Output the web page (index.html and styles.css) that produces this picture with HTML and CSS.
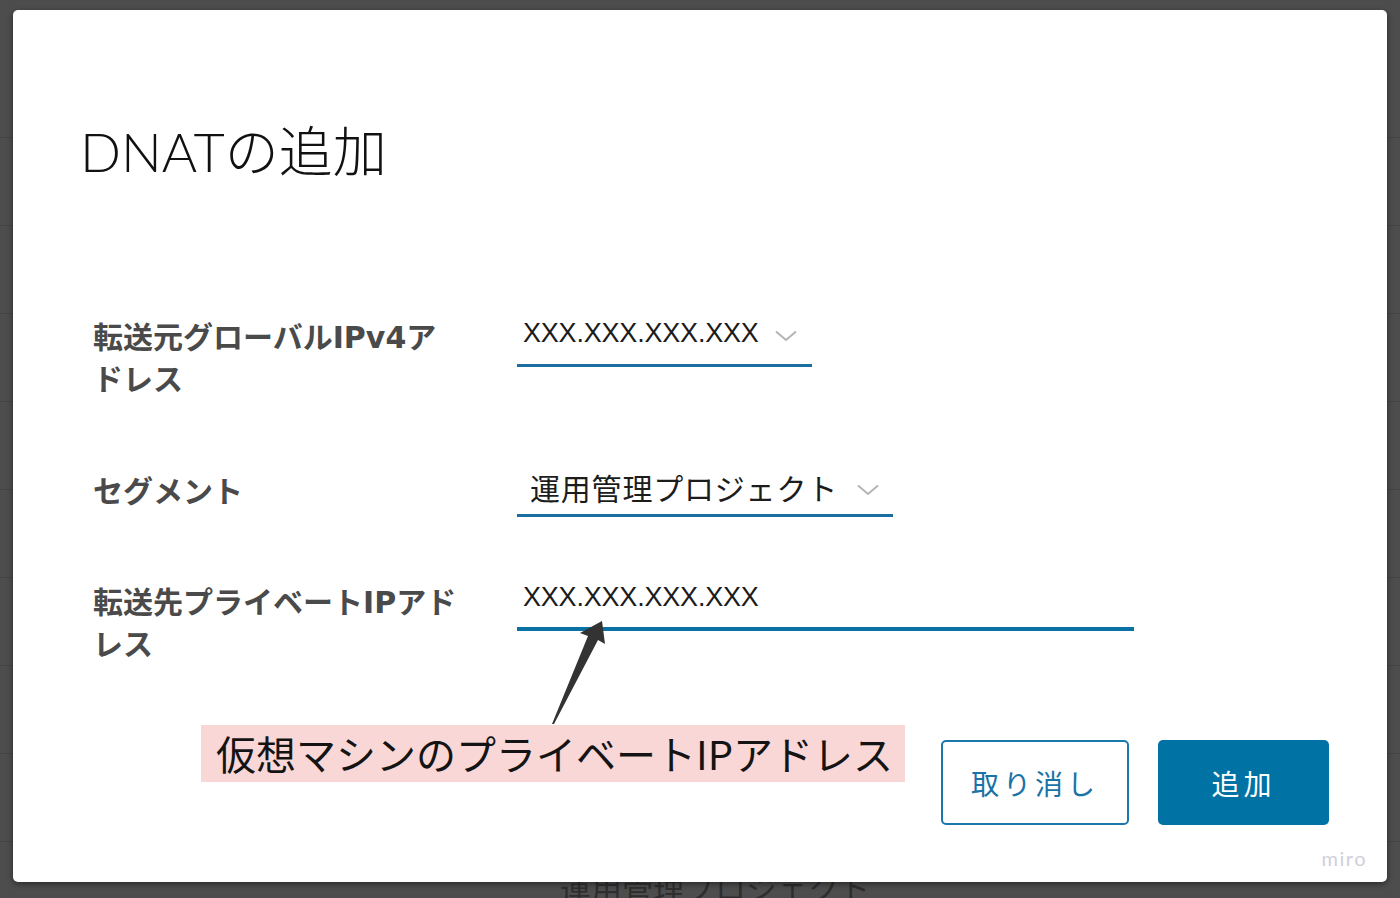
FILE: index.html
```html
<!DOCTYPE html>
<html lang="ja">
<head>
    <meta charset="UTF-8">
    <meta name="viewport" content="width=device-width, initial-scale=1.0">
    <title>DNATの追加</title>
    <link rel="stylesheet" href="styles.css">
</head>
<body>
    <!-- 背景のページ（オーバーレイで暗くなっている） -->
    <div class="backdrop">
        <div class="bg-head"></div>
        <div class="bg-row"></div>
        <div class="bg-row"></div>
        <div class="bg-row"></div>
        <div class="bg-row"></div>
        <div class="bg-row"></div>
        <div class="bg-row"></div>
        <div class="bg-row"></div>
        <div class="bg-row"></div>
        <div class="bg-row bg-text">運用管理プロジェクト</div>
    </div>

    <main class="modal">
        <h1 class="modal-title">DNATの追加</h1>

        <section class="form">
            <div class="form-row">
                <label class="form-label">転送元グローバルIPv4アドレス</label>
                <div class="field select">
                    <span class="value latin">XXX.XXX.XXX.XXX</span>
                    <svg class="chevron" width="22" height="12" viewBox="0 0 22 12"><path d="M1 1.5 L11 10 L21 1.5" fill="none" stroke="#b4b4b4" stroke-width="2"/></svg>
                </div>
            </div>
            <div class="form-row row-segment">
                <label class="form-label">セグメント</label>
                <div class="field select field-segment">
                    <span class="value cjk">運用管理プロジェクト</span>
                    <svg class="chevron" width="22" height="12" viewBox="0 0 22 12"><path d="M1 1.5 L11 10 L21 1.5" fill="none" stroke="#b4b4b4" stroke-width="2"/></svg>
                </div>
            </div>
            <div class="form-row row-private">
                <label class="form-label">転送先プライベートIPアドレス</label>
                <div class="field input">
                    <span class="value latin">XXX.XXX.XXX.XXX</span>
                </div>
            </div>
        </section>

        <footer class="modal-actions">
            <button class="btn btn-outline">取り消し</button>
            <button class="btn btn-primary">追加</button>
        </footer>

        <!-- 注釈 -->
        <svg class="note-arrow" width="80" height="120" viewBox="0 0 80 120">
            <polygon points="62,6 65,29 58,25 14,109 12,109 48,21 40,18" fill="#333333"/>
        </svg>
        <div class="note">仮想マシンのプライベートIPアドレス</div>

        <span class="watermark">miro</span>
    </main>
</body>
</html>
```

FILE: styles.css
```css
* {
    margin: 0;
    padding: 0;
    box-sizing: border-box;
}

body {
    width: 1400px;
    height: 898px;
    overflow: hidden;
    background-color: #4d4d4d;
    font-family: 'Noto Sans CJK JP', sans-serif;
    position: relative;
}

/* 背景 */
.backdrop {
    display: flex;
    flex-direction: column;
}

.bg-head {
    height: 138px;
    border-bottom: 1px solid #444444;
}

.bg-row {
    height: 88px;
    flex-shrink: 0;
    border-bottom: 1px solid #444444;
}

.bg-text {
    padding: 20px 0 0 560px;
    font-size: 31px;
    line-height: 50px;
    color: #2e2e2e;
    border-bottom: none;
}

/* モーダル */
.modal {
    position: absolute;
    top: 10px;
    left: 13px;
    width: 1374px;
    height: 872px;
    background-color: #ffffff;
    border-radius: 5px;
    box-shadow: 0 2px 6px rgba(0, 0, 0, 0.45);
    padding: 110px 58px 0 67px;
    display: flex;
    flex-direction: column;
}

.modal-title {
    font-family: 'Lato', 'Noto Sans CJK JP', sans-serif;
    font-weight: 300;
    font-size: 54px;
    line-height: 64px;
    color: #111111;
}

.form {
    margin-top: 128px;
    padding-left: 13px;
    display: flex;
    flex-direction: column;
}

.form-row {
    display: flex;
    align-items: flex-start;
}

.row-segment {
    margin-top: 65px;
}

.row-private {
    margin-top: 59px;
}

.form-label {
    width: 424px;
    padding: 5px 58px 0 0;
    font-family: 'DejaVu Sans', 'Noto Sans CJK JP', sans-serif;
    font-size: 30px;
    line-height: 42px;
    font-weight: 700;
    color: #4a4a4a;
}

.row-private .form-label {
    padding-top: 6px;
}

.field {
    display: inline-flex;
    align-items: center;
    padding: 0 15px 10px 6px;
    border-bottom: 3px solid #1a6fa0;
    line-height: 42px;
}

.field-segment {
    padding-bottom: 6px;
    padding-right: 14px;
}

.field.input {
    width: 617px;
    padding-bottom: 9px;
    border-bottom-width: 4px;
    border-bottom-color: #0a71a5;
}

.value {
    color: #1c1c1c;
}

.value.latin {
    font-family: 'Liberation Sans', Arial, sans-serif;
    font-size: 27px;
    letter-spacing: -0.2px;
}

.value.cjk {
    font-size: 30px;
    letter-spacing: 0.8px;
    margin-left: 7px;
}

.chevron {
    margin-left: 16px;
    margin-top: 6px;
}

.field-segment .chevron {
    margin-left: 19px;
}

/* ボタン */
.modal-actions {
    margin-top: 74px;
    display: flex;
    justify-content: flex-end;
    gap: 29px;
}

.btn {
    height: 85px;
    border-radius: 5px;
    font-family: 'Noto Sans CJK JP', sans-serif;
    font-size: 28px;
    letter-spacing: 4px;
    cursor: pointer;
}

.btn-outline {
    width: 188px;
    background-color: #ffffff;
    border: 2px solid #1a78ac;
    color: #1a73a6;
}

.btn-primary {
    width: 171px;
    background-color: #0072a3;
    border: none;
    color: #ffffff;
}

/* 注釈 */
.note {
    position: absolute;
    left: 188px;
    top: 715px;
    width: 704px;
    height: 57px;
    background-color: #f9d7d7;
    padding-left: 15px;
    font-size: 40px;
    line-height: 57px;
    color: #141414;
    white-space: nowrap;
}

.note-arrow {
    position: absolute;
    left: 527px;
    top: 605px;
}

.watermark {
    position: absolute;
    right: 20px;
    bottom: 12px;
    font-family: 'Lato', sans-serif;
    font-size: 20px;
    letter-spacing: 1.5px;
    color: #cfcfdc;
}
```
